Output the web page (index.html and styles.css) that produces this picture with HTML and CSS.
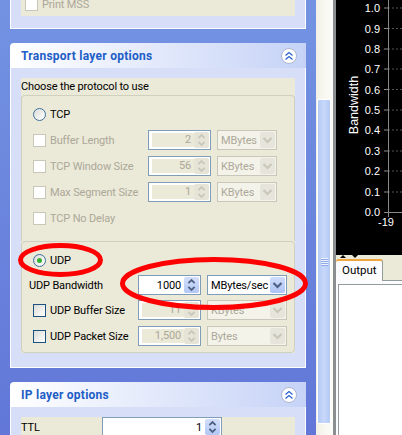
FILE: index.html
```html
<!DOCTYPE html>
<html lang="en">

<head>
    <meta charset="UTF-8">
    <meta name="viewport" content="width=device-width, initial-scale=1.0">
    <title>Transport layer options</title>
    <link rel="stylesheet" href="styles.css">
</head>

<body>

    <!-- Shared chevrons -->
    <svg class="defs" width="0" height="0">
        <symbol id="spin-arrows" viewBox="0 0 15 18">
            <path d="M4 7 L7.5 3.5 L11 7" fill="none" stroke="currentColor" stroke-width="2" />
            <path d="M4 11 L7.5 14.5 L11 11" fill="none" stroke="currentColor" stroke-width="2" />
        </symbol>
        <symbol id="combo-arrow" viewBox="0 0 15 16">
            <path d="M3.5 6 L7.5 10 L11.5 6" fill="none" stroke="currentColor" stroke-width="2.2" />
        </symbol>
        <symbol id="collapse" viewBox="0 0 16 16">
            <circle cx="8" cy="8" r="7.5" fill="#fff" stroke="#aeb6cf" />
            <path d="M4.5 7.5 L8 4.5 L11.5 7.5 M4.5 11.5 L8 8.5 L11.5 11.5" fill="none" stroke="#2d62d6" stroke-width="1.3" />
        </symbol>
    </svg>

    <div class="app">

        <!-- Options sidebar -->
        <div class="sidebar">

            <div class="panel panel-clipped">
                <div class="panel-body">
                    <div class="box box-print">
                        <div class="row">
                            <span class="check off"></span>
                            <span class="label off">Print MSS</span>
                        </div>
                    </div>
                </div>
            </div>

            <div class="panel">
                <div class="panel-head">
                    <span>Transport layer options</span>
                    <svg class="collapse-icon"><use href="#collapse" /></svg>
                </div>
                <div class="panel-body">
                    <div class="box">
                        <div class="box-title">Choose the protocol to use</div>

                        <!-- TCP group -->
                        <div class="group group-tcp">
                            <div class="row">
                                <span class="radio"></span>
                                <span class="label">TCP</span>
                            </div>
                            <div class="row">
                                <span class="check off"></span>
                                <span class="label label-tcp off">Buffer Length</span>
                                <div class="spin spin-off"><span class="spin-value">2</span><span class="spin-btn"><svg><use href="#spin-arrows" /></svg></span></div>
                                <div class="combo combo-off"><span class="combo-value">MBytes</span><span class="combo-btn"><svg><use href="#combo-arrow" /></svg></span></div>
                            </div>
                            <div class="row">
                                <span class="check off"></span>
                                <span class="label label-tcp off">TCP Window Size</span>
                                <div class="spin spin-off"><span class="spin-value">56</span><span class="spin-btn"><svg><use href="#spin-arrows" /></svg></span></div>
                                <div class="combo combo-off"><span class="combo-value">KBytes</span><span class="combo-btn"><svg><use href="#combo-arrow" /></svg></span></div>
                            </div>
                            <div class="row">
                                <span class="check off"></span>
                                <span class="label label-tcp off">Max Segment Size</span>
                                <div class="spin spin-off"><span class="spin-value">1</span><span class="spin-btn"><svg><use href="#spin-arrows" /></svg></span></div>
                                <div class="combo combo-off"><span class="combo-value">KBytes</span><span class="combo-btn"><svg><use href="#combo-arrow" /></svg></span></div>
                            </div>
                            <div class="row">
                                <span class="check off"></span>
                                <span class="label off">TCP No Delay</span>
                            </div>
                        </div>

                        <!-- UDP group -->
                        <div class="group group-udp">
                            <div class="row">
                                <span class="radio radio-on"></span>
                                <span class="label">UDP</span>
                            </div>
                            <div class="row row-plain">
                                <span class="label label-bandwidth">UDP Bandwidth</span>
                                <div class="spin"><span class="spin-value">1000</span><span class="spin-btn"><svg><use href="#spin-arrows" /></svg></span></div>
                                <div class="combo combo-wide"><span class="combo-value">MBytes/sec</span><span class="combo-btn"><svg><use href="#combo-arrow" /></svg></span></div>
                            </div>
                            <div class="row">
                                <span class="check"></span>
                                <span class="label label-udp">UDP Buffer Size</span>
                                <div class="spin spin-off"><span class="spin-value">11</span><span class="spin-btn"><svg><use href="#spin-arrows" /></svg></span></div>
                                <div class="combo combo-wide combo-off"><span class="combo-value">KBytes</span><span class="combo-btn"><svg><use href="#combo-arrow" /></svg></span></div>
                            </div>
                            <div class="row row-last">
                                <span class="check"></span>
                                <span class="label label-udp">UDP Packet Size</span>
                                <div class="spin spin-off"><span class="spin-value">1,500</span><span class="spin-btn"><svg><use href="#spin-arrows" /></svg></span></div>
                                <div class="combo combo-wide combo-off"><span class="combo-value">Bytes</span><span class="combo-btn"><svg><use href="#combo-arrow" /></svg></span></div>
                            </div>
                        </div>
                    </div>
                </div>
            </div>

            <div class="panel">
                <div class="panel-head">
                    <span>IP layer options</span>
                    <svg class="collapse-icon"><use href="#collapse" /></svg>
                </div>
                <div class="panel-body">
                    <div class="box box-ttl">
                        <div class="row">
                            <span class="label label-ttl">TTL</span>
                            <div class="spin spin-ttl"><span class="spin-value">1</span><span class="spin-btn"><svg><use href="#spin-arrows" /></svg></span></div>
                        </div>
                    </div>
                </div>
            </div>
        </div>

        <!-- Scrollbar -->
        <div class="scrollbar">
            <div class="thumb">
                <span class="grip"></span>
                <span class="grip"></span>
                <span class="grip"></span>
                <span class="grip"></span>
            </div>
        </div>

        <!-- Plot and output -->
        <div class="right">
            <svg class="chart" width="66" height="255" viewBox="0 0 66 255">
                <g class="grid">
                    <path d="M52 8 H66 M52 28.5 H66 M52 49 H66 M52 69 H66 M52 89.5 H66 M52 110 H66 M52 130 H66 M52 151 H66 M52 171 H66 M52 192 H66" />
                </g>
                <g class="ticks">
                    <path d="M48 8 H52 M48 28.5 H52 M48 49 H52 M48 69 H52 M48 89.5 H52 M48 110 H52 M48 130 H52 M48 151 H52 M48 171 H52 M48 192 H52 M48 212.5 H66" />
                    <path d="M52.5 0 V217" />
                </g>
                <g class="tick-labels">
                    <text x="44" y="12">1.0</text>
                    <text x="44" y="32.5">0.9</text>
                    <text x="44" y="53">0.8</text>
                    <text x="44" y="73">0.7</text>
                    <text x="44" y="93.5">0.6</text>
                    <text x="44" y="114">0.5</text>
                    <text x="44" y="134">0.4</text>
                    <text x="44" y="155">0.3</text>
                    <text x="44" y="175">0.2</text>
                    <text x="44" y="196">0.1</text>
                    <text x="44" y="216">0.0</text>
                    <text x="58" y="226">-19</text>
                </g>
                <text class="axis-title" transform="translate(22 105) rotate(-90)">Bandwidth</text>
            </svg>

            <div class="split-bar">
                <span class="arrow-up"></span>
                <span class="arrow-down"></span>
            </div>
            <div class="tabs">
                <div class="tab">Output</div>
            </div>
            <div class="tab-pane">
                <div class="output"></div>
            </div>
        </div>
    </div>

    <!-- Red marks drawn over the screenshot -->
    <svg class="marks" width="402" height="435">
        <ellipse cx="60.5" cy="260" rx="40" ry="14.5" />
        <ellipse cx="214" cy="283.5" rx="91.5" ry="24" />
    </svg>

</body>

</html>
```

FILE: styles.css
```css
body {
    margin: 0;
    overflow: hidden;
    font-family: Roboto, "Liberation Sans", sans-serif;
    font-size: 11px;
    letter-spacing: -0.15px;
    color: #000;
}

.defs {
    position: absolute;
}

.app {
    display: flex;
    width: 402px;
    height: 435px;
    overflow: hidden;
}

/* Sidebar */
.sidebar {
    display: flex;
    flex-direction: column;
    gap: 14px;
    flex: none;
    width: 316px;
    padding: 0 10px;
    box-sizing: border-box;
    background: linear-gradient(to bottom, #7393e2, #6277d8);
}

.panel {
    flex: none;
}

.panel-clipped {
    margin-top: -6px;
}

.panel-head {
    display: flex;
    align-items: center;
    justify-content: space-between;
    height: 25px;
    padding: 0 9px 0 11px;
    background: linear-gradient(to right, #fff, #c6d3f7);
    border-top-left-radius: 4px;
    font-size: 12px;
    font-weight: bold;
    letter-spacing: 0.25px;
    color: #215dc6;
}

.collapse-icon {
    width: 16px;
    height: 16px;
}

.panel-body {
    padding: 10px 10px 14px;
    background: #d6dff7;
    border: 1px solid #fff;
    border-top: none;
}

.panel-clipped .panel-body {
    padding-top: 0;
    padding-bottom: 12px;
}

.box {
    background: #ebe9d8;
}

.box-print {
    padding: 0 0 2px 4px;
}

.box-title {
    height: 17px;
    line-height: 17px;
}

.group {
    display: flex;
    flex-direction: column;
    padding-left: 11px;
    border: 1px solid #d0d0bf;
}

.group-tcp {
    gap: 6px;
    padding-top: 8px;
    padding-bottom: 13px;
    border-bottom: none;
    border-radius: 4px 4px 0 0;
}

.group-udp {
    gap: 5px;
    padding-top: 8px;
    padding-bottom: 6px;
    border-radius: 4px;
}

.row {
    display: flex;
    align-items: center;
    height: 20px;
}

.row-plain {
    margin-left: -4px;
}

.row-last {
    margin-top: 1px;
}

.label {
    margin-left: 4px;
    white-space: nowrap;
}

.off {
    color: #aca899;
}

.label-tcp {
    width: 98px;
}

.label-udp {
    width: 88px;
}

.label-bandwidth {
    width: 109px;
    margin-left: 0;
}

.label-ttl {
    width: 81px;
    margin-left: 0;
}

/* Check boxes and radio buttons */
.check,
.radio {
    flex: none;
    width: 13px;
    height: 13px;
    box-sizing: border-box;
    border: 1px solid #1c5180;
    background: linear-gradient(135deg, #dcdcd7, #fff);
}

.check.off {
    border-color: #c9c7ba;
    background: #fff;
}

.radio {
    display: flex;
    align-items: center;
    justify-content: center;
    border-color: #3f6f9f;
    border-radius: 50%;
}

.radio-on::after {
    content: "";
    width: 5px;
    height: 5px;
    border-radius: 50%;
    background: #35b335;
}

/* Spinners */
.spin {
    display: flex;
    flex: none;
    align-items: center;
    width: 63px;
    height: 20px;
    box-sizing: border-box;
    padding: 1px;
    border: 1px solid #7f9db9;
    background: #fff;
}

.spin-value {
    flex: 1;
    padding-right: 3px;
    text-align: right;
}

.spin-btn {
    display: flex;
    flex: none;
    width: 15px;
    height: 16px;
    border-radius: 2px;
    background: linear-gradient(to bottom, #d3def9, #b3c7f5);
    color: #4d6185;
}

.spin-btn svg {
    width: 15px;
    height: 16px;
}

.spin-off .spin-value {
    height: 14px;
    line-height: 14px;
    margin: 0 0 0 2px;
    background: #ebe9d8;
    color: #aca899;
}

.spin-off .spin-btn {
    background: #e6e4d7;
    color: #c9c7ba;
}

.spin-ttl {
    width: 120px;
}

/* Combo boxes */
.combo {
    display: flex;
    flex: none;
    align-items: center;
    justify-content: space-between;
    width: 60px;
    height: 20px;
    box-sizing: border-box;
    margin-left: 6px;
    padding: 1px;
    border: 1px solid #7f9db9;
    background: #fff;
}

.combo-wide {
    width: 80px;
}

.combo-value {
    padding-left: 2px;
}

.combo-btn {
    display: flex;
    flex: none;
    width: 15px;
    height: 16px;
    border-radius: 2px;
    background: linear-gradient(to bottom, #cfdcfb, #adc3f5);
    color: #4d6185;
}

.combo-btn svg {
    width: 15px;
    height: 16px;
}

.combo-off {
    border-color: #c9c7ba;
    background: #f4f3ea;
    color: #aca899;
}

.combo-off .combo-btn {
    background: #e6e5db;
    color: #c9c7ba;
}

/* Scrollbar */
.scrollbar {
    flex: none;
    width: 17px;
    padding-top: 99px;
    box-sizing: border-box;
    background: linear-gradient(to right, #f3f1e6, #fdfdfa);
}

.thumb {
    display: flex;
    flex-direction: column;
    align-items: center;
    justify-content: center;
    gap: 1px;
    width: 14px;
    height: 325px;
    margin-left: 1px;
    box-sizing: border-box;
    border: 1px solid #fff;
    border-radius: 2px;
    background: linear-gradient(to right, #b4c9f5, #c8d8fb 50%, #b4c9f5);
}

.grip {
    width: 7px;
    height: 1px;
    background: #eef3fe;
    box-shadow: 0 1px 0 #8ea9e6;
}

/* Right side */
.right {
    display: flex;
    flex: 1;
    flex-direction: column;
    min-width: 0;
    background: #ebe9d8;
    border-left: 3px solid #8b8f8f;
}

.chart {
    display: block;
    flex: none;
    background: #000;
}

.grid path {
    fill: none;
    stroke: #555;
    stroke-dasharray: 2 2;
}

.ticks path {
    fill: none;
    stroke: #8a8a8a;
}

.tick-labels text {
    font-family: "Liberation Sans", sans-serif;
    font-size: 11px;
    letter-spacing: 0;
    fill: #fff;
    text-anchor: end;
}

.axis-title {
    font-family: "Liberation Sans", sans-serif;
    font-size: 12.5px;
    letter-spacing: 0;
    fill: #fff;
    text-anchor: middle;
}

.split-bar {
    display: flex;
    flex: none;
    gap: 6px;
    height: 4px;
    padding-left: 4px;
}

.arrow-up,
.arrow-down {
    width: 0;
    height: 0;
    border-left: 3px solid transparent;
    border-right: 3px solid transparent;
}

.arrow-up {
    border-bottom: 3px solid #000;
}

.arrow-down {
    border-top: 3px solid #000;
}

.tabs {
    flex: none;
    height: 22px;
    box-sizing: border-box;
    border-bottom: 1px solid #919b9c;
}

.tab {
    width: 47px;
    height: 22px;
    box-sizing: border-box;
    padding-left: 6px;
    border-top: 2px solid #f0a63c;
    border-right: 1px solid #919b9c;
    border-radius: 3px 3px 0 0;
    background: #fcfcfe;
    font-size: 11.5px;
    letter-spacing: 0;
    line-height: 19px;
}

.tab-pane {
    flex: 1;
    padding: 3px 0 0 2px;
    background: #fcfcfe;
}

.output {
    height: 100%;
    background: #fff;
    border: 1px solid #919b9c;
    border-right: none;
    border-bottom: none;
}

/* Red marks */
.marks {
    position: absolute;
    top: 0;
    left: 0;
    pointer-events: none;
}

.marks ellipse {
    fill: none;
    stroke: #f00;
    stroke-width: 5;
}
```
